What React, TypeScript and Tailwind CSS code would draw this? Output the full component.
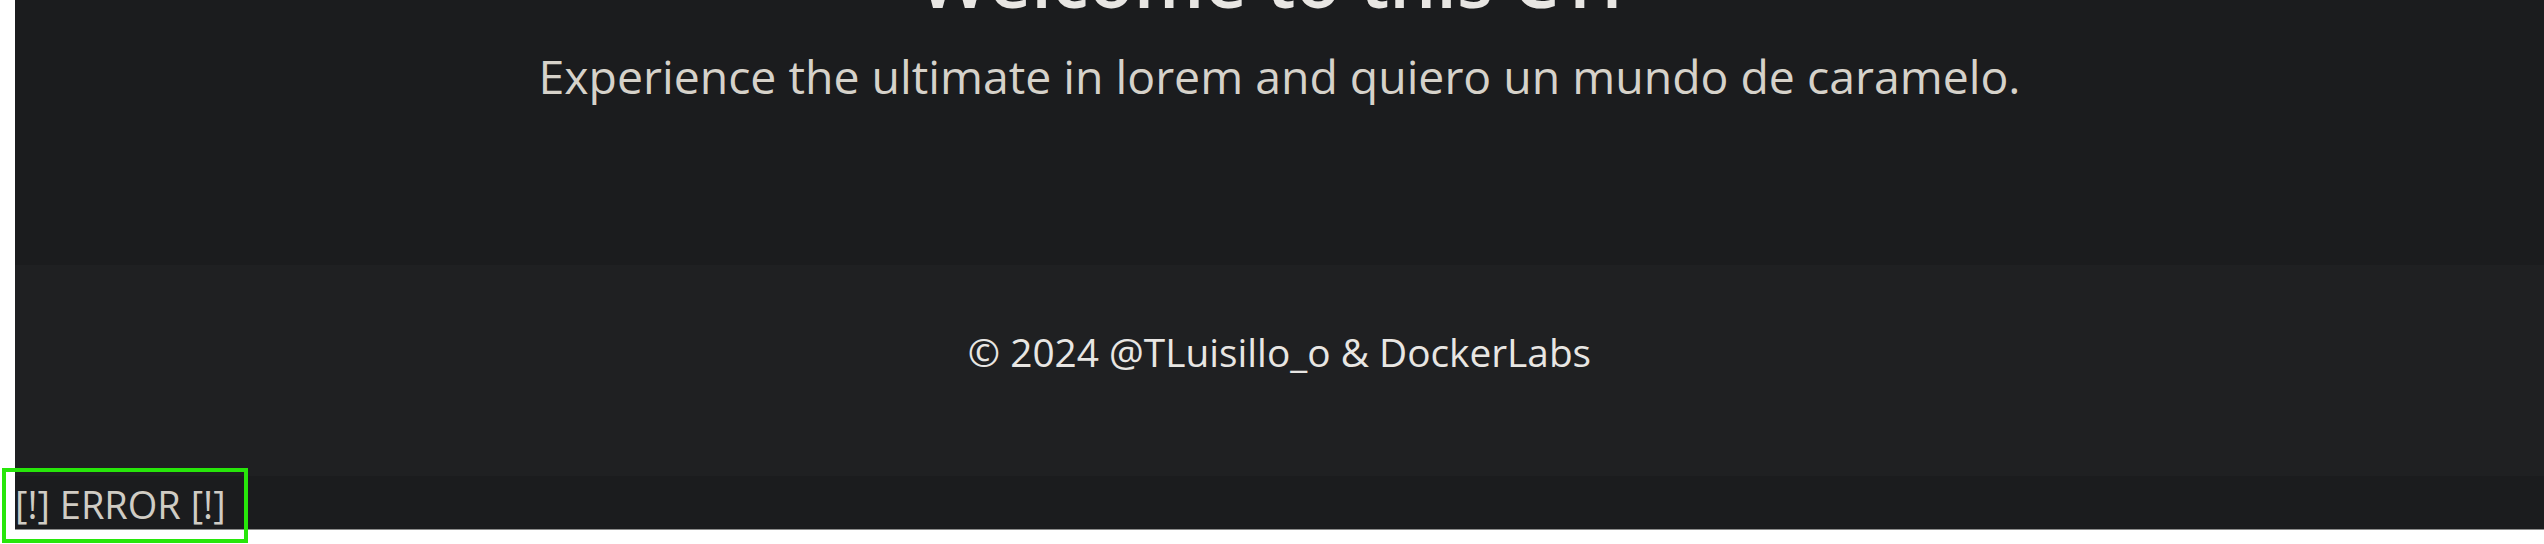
export default function App() {
  return (
    <div className="relative h-[544px] w-[2544px] overflow-hidden bg-white pl-[15px] font-['Open_Sans',sans-serif]">
      <div className="flex flex-col border-b border-[#8c8c8c]">
        <section className="flex h-[265px] flex-col items-center bg-[#1b1c1e]">
          <h1 className="mt-[-57px] text-[74px] font-semibold leading-none text-[#e8e6e3]">Welcome to this CTF</h1>
          <p className="mt-[36px] text-[46.4px] leading-none text-[#d6d2ca]">
            Experience the ultimate in lorem and quiero un mundo de caramelo.
          </p>
        </section>

        <footer className="flex h-[211px] justify-center bg-[#1f2022] pt-[68px]">
          <p className="text-[38.8px] leading-none text-[#e8e6e3]">© 2024 @TLuisillo_o &amp; DockerLabs</p>
        </footer>

        <div className="h-[53px] bg-[#1b1c1e] pt-[9px]">
          <p className="text-[38px] leading-none text-[#d0ccc4]">[!] ERROR [!]</p>
        </div>
      </div>

      {/* highlight box over the error line */}
      <div className="absolute left-[2px] top-[468px] h-[75px] w-[246px] border-[4px] border-[#27e60a]" />
    </div>
  );
}
